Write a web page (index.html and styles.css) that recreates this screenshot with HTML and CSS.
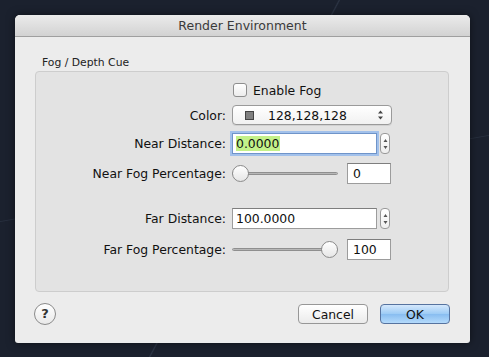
FILE: index.html
```html
<!DOCTYPE html>
<html lang="en">
<head>
  <meta charset="UTF-8">
  <title>Render Environment</title>
  <link rel="stylesheet" href="styles.css">
</head>
<body>
  <div class="window">
    <div class="titlebar">Render Environment</div>
    <div class="content">
      <div class="group-label">Fog / Depth Cue</div>
      <div class="group">
        <div class="row row-check">
          <span class="label"></span>
          <label class="check"><span class="box"></span>Enable Fog</label>
        </div>
        <div class="row row-color">
          <span class="label">Color:</span>
          <div class="popup">
            <span class="swatch"></span>
            <span class="popup-text">128,128,128</span>
            <span class="arrows">
              <svg width="7" height="10" viewBox="0 0 7 10"><path d="M3.5 0.5 L6 3.5 H1 Z M3.5 9.5 L6 6.5 H1 Z" fill="#444"/></svg>
            </span>
          </div>
        </div>
        <div class="row row-near">
          <span class="label">Near Distance:</span>
          <div class="field field-long focused"><span class="sel">0.0000</span></div>
          <div class="stepper">
            <svg width="5" height="14" viewBox="0 0 5 14"><path d="M2.5 2 L4.5 5 H0.5 Z M2.5 12 L4.5 9 H0.5 Z" fill="#555"/></svg>
          </div>
        </div>
        <div class="row row-nfog">
          <span class="label">Near Fog Percentage:</span>
          <div class="slider"><div class="track"></div><div class="knob knob-start"></div></div>
          <div class="field field-short">0</div>
        </div>
        <div class="row row-far">
          <span class="label">Far Distance:</span>
          <div class="field field-long">100.0000</div>
          <div class="stepper">
            <svg width="5" height="14" viewBox="0 0 5 14"><path d="M2.5 2 L4.5 5 H0.5 Z M2.5 12 L4.5 9 H0.5 Z" fill="#555"/></svg>
          </div>
        </div>
        <div class="row row-ffog">
          <span class="label">Far Fog Percentage:</span>
          <div class="slider"><div class="track"></div><div class="knob knob-end"></div></div>
          <div class="field field-short">100</div>
        </div>
      </div>
      <div class="footer">
        <div class="help">?</div>
        <div class="buttons">
          <button class="btn">Cancel</button>
          <button class="btn btn-default">OK</button>
        </div>
      </div>
    </div>
  </div>
</body>
</html>
```
FILE: styles.css
```css
body {
  margin: 0;
  width: 489px;
  height: 357px;
  background-color: #1b212e;
  background-image:
    linear-gradient(118deg, transparent 49.8%, rgba(120,140,170,0.18) 50%, transparent 50.2%),
    linear-gradient(170deg, transparent 49.8%, rgba(120,140,170,0.12) 50%, transparent 50.2%);
  font-family: "DejaVu Sans", sans-serif;
  font-size: 12.4px;
  color: #111;
  overflow: hidden;
}
.window {
  margin: 15px 0 0 15px;
  width: 455px;
  height: 328px;
  background: #ececec;
  border-radius: 5px 5px 3px 3px;
  box-shadow: 0 0 8px rgba(0,0,0,0.5);
  overflow: hidden;
}
.titlebar {
  height: 21px;
  line-height: 21px;
  text-align: center;
  font-size: 12.5px;
  color: #3a3a3a;
  background: linear-gradient(#ebebeb, #d2d2d2);
  border-bottom: 1px solid #9f9f9f;
}
.content {
  padding: 0 20px 0 20px;
}
.group-label {
  font-size: 10.8px;
  padding: 19px 0 0 7px;
  height: 15px;
  color: #222;
}
.group {
  width: 412px;
  height: 219px;
  background: #e3e3e3;
  border: 1px solid #cdcdcd;
  border-radius: 4px;
  box-sizing: content-box;
}
.row {
  display: flex;
  align-items: center;
}
.label {
  width: 190px;
  margin-right: 6px;
  text-align: right;
  white-space: nowrap;
}
.row-check { margin-top: 11px; height: 14px; }
.row-color { margin-top: 8px; height: 20px; }
.row-near { margin-top: 8px; height: 21px; }
.row-nfog { margin-top: 9px; height: 21px; }
.row-far { margin-top: 24px; height: 21px; }
.row-ffog { margin-top: 10px; height: 20px; }

.check {
  display: flex;
  align-items: center;
  margin-left: 1px;
}
.box {
  width: 12px;
  height: 12px;
  border: 1px solid #8e8e8e;
  border-radius: 3px;
  background: linear-gradient(#ffffff, #ececec);
  margin-right: 6px;
}
.popup {
  width: 158px;
  height: 18px;
  border: 1px solid #9a9a9a;
  border-radius: 4px;
  background: linear-gradient(#ffffff, #f1f1f1);
  display: flex;
  align-items: center;
  box-shadow: 0 1px 0 rgba(0,0,0,0.08);
}
.swatch {
  width: 7px;
  height: 7px;
  background: #808080;
  border: 1px solid #444;
  margin-left: 12px;
}
.popup-text {
  margin-left: 14px;
  flex: 1;
}
.arrows {
  margin-right: 7px;
  display: flex;
}
.field {
  height: 19px;
  line-height: 19px;
  background: #fff;
  border: 1px solid #9c9c9c;
  border-top-color: #7e7e7e;
  box-sizing: border-box;
  padding-left: 3px;
}
.field-long {
  width: 145px;
  height: 21px;
  line-height: 19px;
}
.field-short {
  width: 44px;
  height: 21px;
  padding-left: 5px;
}
.focused {
  border-color: #6f94c9;
  box-shadow: 0 0 0 2px #a2c1eb;
}
.sel {
  background: #c3f18a;
  padding-right: 1px;
}
.stepper {
  width: 8px;
  height: 19px;
  margin-left: 3px;
  border: 1px solid #9a9a9a;
  border-radius: 4px;
  background: linear-gradient(#ffffff, #eeeeee);
  display: flex;
  align-items: center;
  justify-content: center;
}
.slider {
  width: 106px;
  height: 18px;
  margin-right: 9px;
  display: flex;
  align-items: center;
}
.track {
  width: 100%;
  height: 3px;
  border-radius: 2px;
  background: linear-gradient(#9a9a9a, #d4d4d4);
  border: 1px solid #8f8f8f;
  box-sizing: border-box;
}
.knob {
  width: 15px;
  height: 15px;
  border-radius: 50%;
  border: 1px solid #8a8a8a;
  background: linear-gradient(#ffffff, #e6e6e6);
  flex: none;
}
.knob-start { margin-left: -106px; }
.knob-end { margin-left: -17px; }
.footer {
  display: flex;
  justify-content: space-between;
  align-items: center;
  margin-top: 11px;
  padding-left: 0;
}
.help {
  width: 20px;
  height: 20px;
  border-radius: 50%;
  border: 1px solid #8a8a8a;
  background: linear-gradient(#ffffff, #e9e9e9);
  text-align: center;
  line-height: 20px;
  font-weight: bold;
  font-size: 13px;
  color: #333;
  margin-left: -1px;
}
.buttons {
  display: flex;
  gap: 12px;
}
.btn {
  width: 70px;
  height: 20px;
  font-family: "DejaVu Sans", sans-serif;
  font-size: 12.4px;
  border: 1px solid #979797;
  border-radius: 4px;
  background: linear-gradient(#ffffff, #ebebeb);
  padding: 0;
  color: #111;
}
.btn-default {
  border-color: #56739f;
  background: linear-gradient(#d5e8fc, #9ccbf5 50%, #88bdf0 51%, #b4dafb);
}
```
